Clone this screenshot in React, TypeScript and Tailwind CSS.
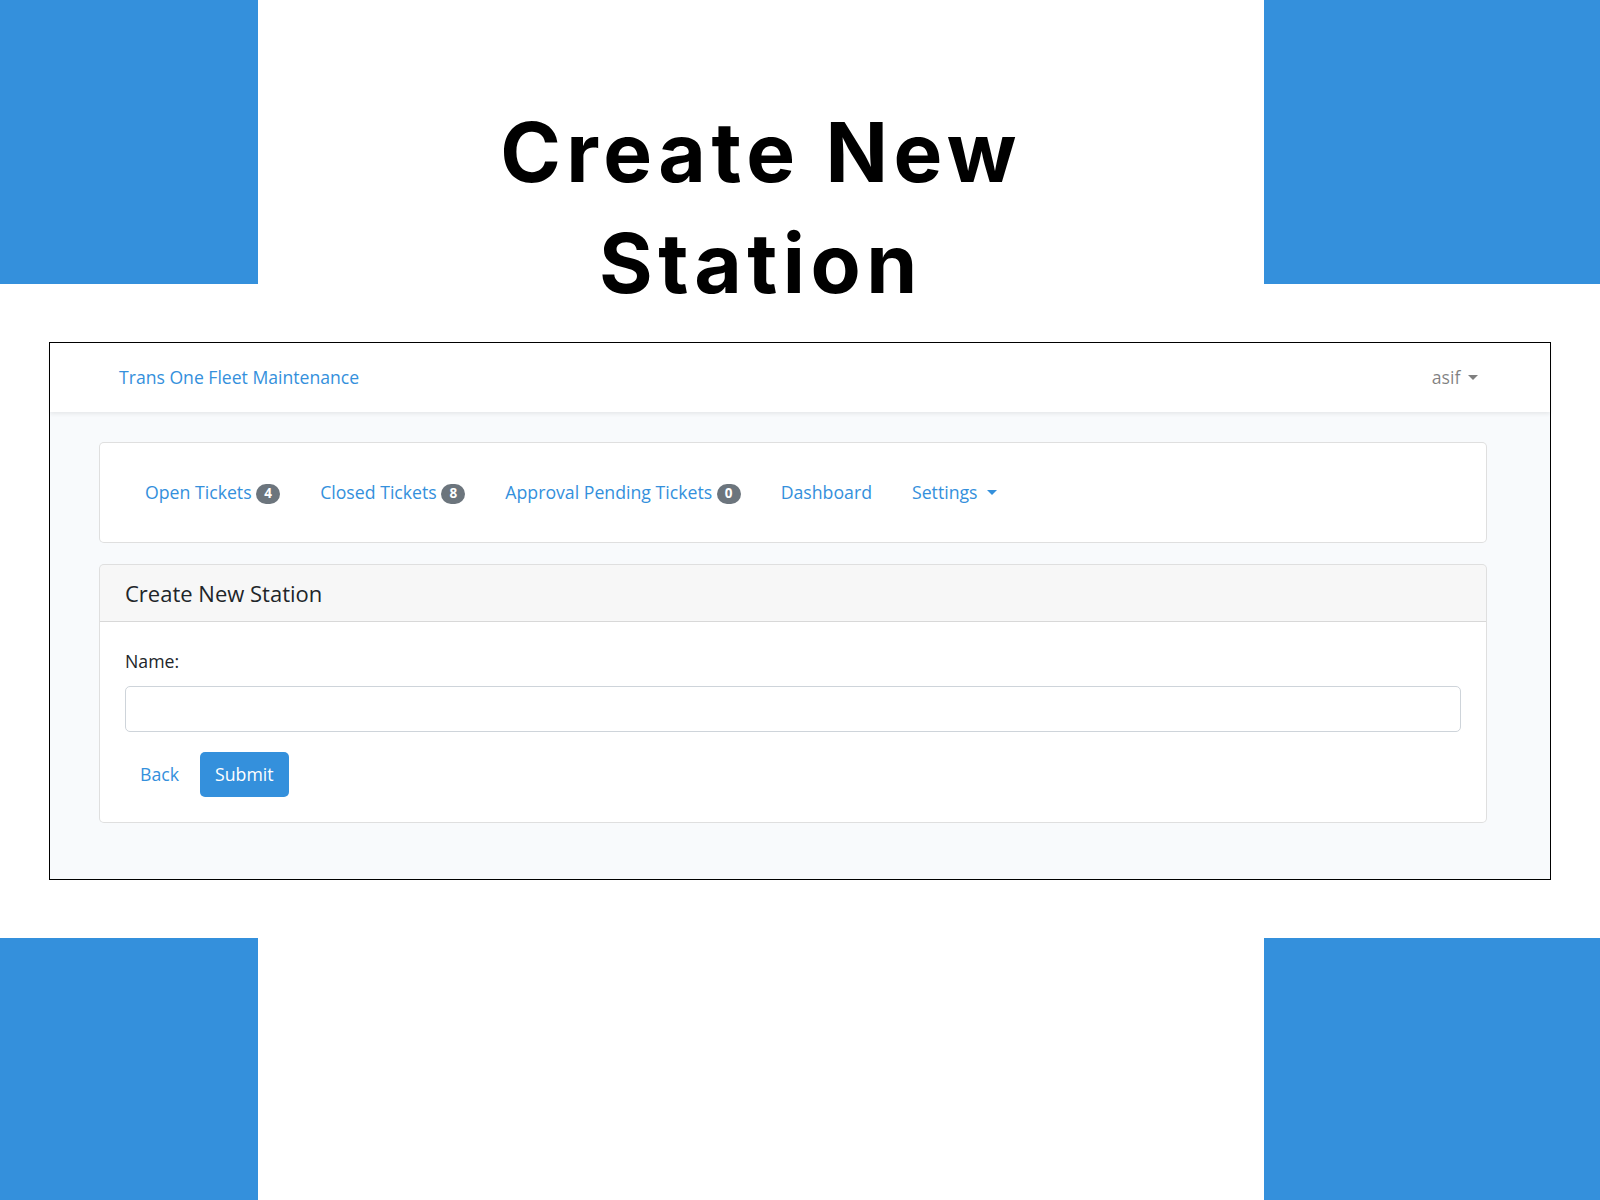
import React from "react";

const NAV_ITEMS: { label: string; badge?: string; caret?: boolean }[] = [
  { label: "Open Tickets", badge: "4" },
  { label: "Closed Tickets", badge: "8" },
  { label: "Approval Pending Tickets", badge: "0" },
  { label: "Dashboard" },
  { label: "Settings", caret: true },
];

function Caret({ className = "" }: { className?: string }) {
  return (
    <span
      className={`inline-block w-0 h-0 align-[0.2em] border-t-[5px] border-x-[5px] border-x-transparent border-t-current ${className}`}
    />
  );
}

function Badge({ value }: { value: string }) {
  return (
    <span className="inline-block rounded-full bg-[#6c757d] text-white text-[13.5px] font-bold leading-none px-[0.6em] py-[0.25em] align-[1px]">
      {value}
    </span>
  );
}

export default function App() {
  return (
    <div className="w-[1600px] h-[1200px] bg-white overflow-hidden flex flex-col font-['Open_Sans','Noto_Sans',sans-serif] text-[#212529]">
      {/* Top banner */}
      <div className="flex h-[284px] shrink-0">
        <div className="w-[258px] bg-[#3490dc]" />
        <div className="flex-1 pt-[97px] text-center">
          <h1 className="font-['Inter',sans-serif] font-bold text-[82px] leading-[111px] tracking-[5.5px] text-black">
            Create New
            <br />
            Station
          </h1>
        </div>
        <div className="w-[336px] bg-[#3490dc]" />
      </div>

      {/* Screenshot frame */}
      <div className="mx-[49px] mt-[58px] shrink-0 border border-black bg-[#f8fafc]">
        <nav className="h-[69px] bg-white shadow-[0_2px_4px_rgba(0,0,0,0.075)] flex items-center justify-between pl-[69px] pr-[72px] relative">
          <span className="text-[17.6px] text-[#3490dc] -mt-[1px]">Trans One Fleet Maintenance</span>
          <span className="text-[17.7px] text-[rgba(0,0,0,0.5)] -mt-[1px]">
            asif <Caret className="ml-[3px]" />
          </span>
        </nav>

        <main className="pt-[30px] pb-[56px] pl-[49px] pr-[63px]">
          {/* Tabs card */}
          <div className="bg-white border border-[rgba(0,0,0,0.125)] rounded-[5px] p-[25px]">
            <ul className="flex">
              {NAV_ITEMS.map((item) => (
                <li key={item.label}>
                  <a className="block px-[20px] py-[10px] text-[17.7px] leading-[28.8px] text-[#3490dc] cursor-pointer">
                    {item.label}
                    {item.badge && (
                      <>
                        {" "}
                        <Badge value={item.badge} />
                      </>
                    )}
                    {item.caret && <Caret className="ml-[9px]" />}
                  </a>
                </li>
              ))}
            </ul>
          </div>

          {/* Form card */}
          <div className="mt-[21px] bg-white border border-[rgba(0,0,0,0.125)] rounded-[5px]">
            <div className="bg-[rgba(0,0,0,0.03)] border-b border-[rgba(0,0,0,0.125)] rounded-t-[4px] px-[25px] py-[15px] text-[22px] leading-[26px] font-medium">
              Create New Station
            </div>
            <div className="p-[25px]">
              <label className="block mb-[10px] text-[17.7px] leading-[28.8px]">Name:</label>
              <input
                type="text"
                className="block w-full h-[46px] border border-[#ced4da] rounded-[5px] bg-white px-[15px] text-[18px] outline-none"
              />
              <div className="mt-[20px] flex items-center gap-[6px]">
                <button className="h-[45px] px-[15px] text-[17.7px] text-[#3490dc]">Back</button>
                <button className="h-[45px] px-[15px] rounded-[5px] bg-[#3490dc] text-white text-[17.7px]">
                  Submit
                </button>
              </div>
            </div>
          </div>
        </main>
      </div>

      {/* Bottom banner */}
      <div className="flex justify-between mt-[58px] flex-1">
        <div className="w-[258px] bg-[#3490dc]" />
        <div className="w-[336px] bg-[#3490dc]" />
      </div>
    </div>
  );
}
